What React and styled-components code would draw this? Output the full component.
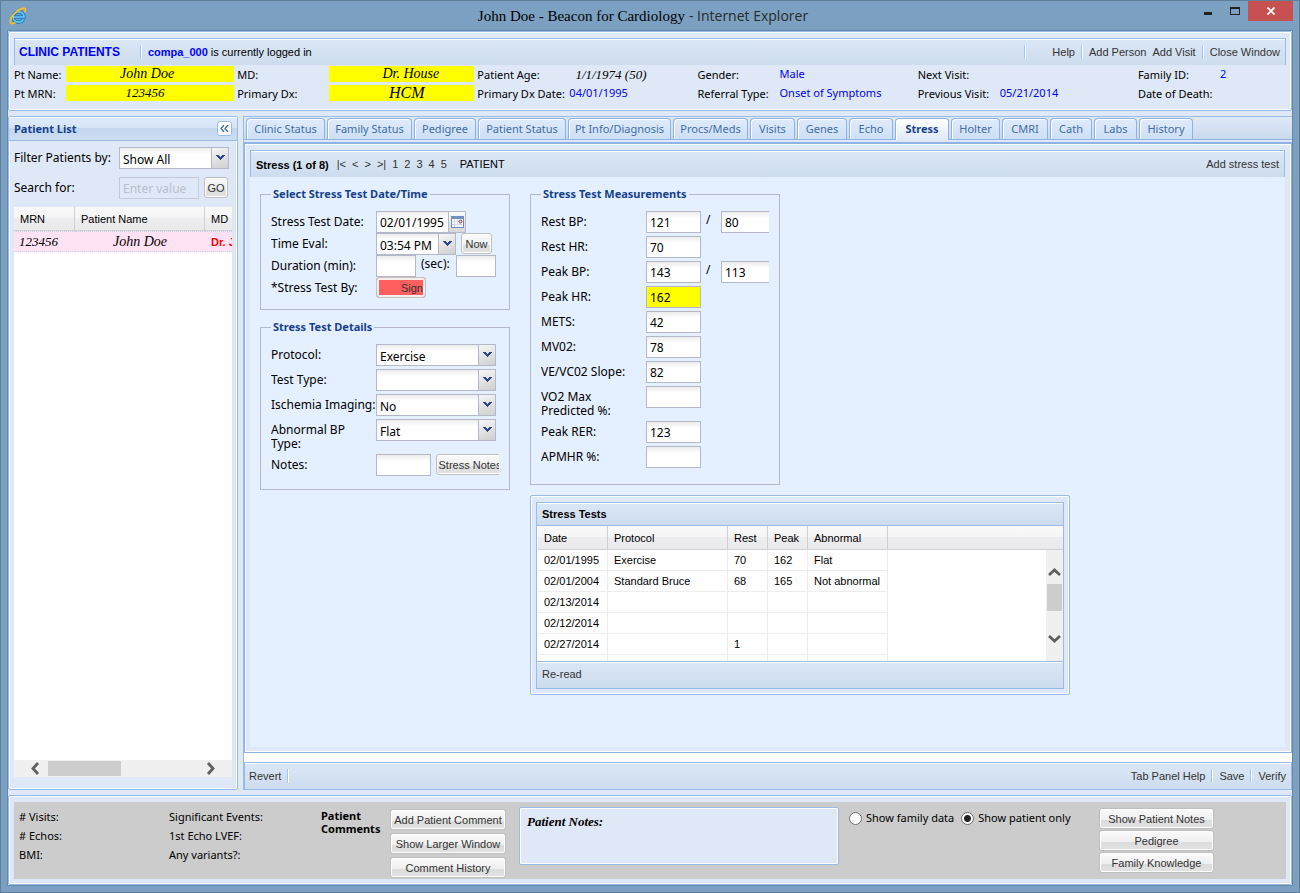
import React, { useState } from 'react';
import styled, { createGlobalStyle } from 'styled-components';

const sans = '"Noto Sans", "Open Sans", sans-serif';
const arial = '"Liberation Sans", Arial, sans-serif';
const serif = '"Liberation Serif", "Times New Roman", serif';

const GlobalStyle = createGlobalStyle`
  * {
    box-sizing: border-box;
  }
  body {
    margin: 0;
    font-family: ${sans};
    font-size: 12px;
    line-height: 14px;
    color: #000;
  }
  button, input, select {
    font: inherit;
    color: inherit;
    margin: 0;
  }
  button {
    cursor: pointer;
  }
`;

/* window chrome */

const Window = styled.div`
  display: flex;
  flex-direction: column;
  min-height: 100vh;
  padding: 0 6px 6px;
  background: #7ba0c1;
  border: 1px solid #5f7e99;
`;

const TitleBar = styled.header`
  display: grid;
  grid-template-columns: 1fr auto 1fr;
  height: 29px;
`;

const TitleIcon = styled.svg`
  width: 18px;
  height: 18px;
  margin: 6px 0 0 2px;
`;

const Title = styled.h1`
  margin: 0;
  padding: 5px 14px 0 0;
  font: normal 15px/20px ${serif};
  span {
    margin-left: 4px;
    font: 14px/20px "Open Sans", ${sans};
    color: #2a2a2a;
  }
`;

const WindowButtons = styled.div`
  display: flex;
  justify-content: flex-end;
`;

const WindowButton = styled.button`
  width: ${(props) => (props.$close ? '45px' : '27px')};
  height: 20px;
  padding: 0;
  border: 0;
  background: ${(props) => (props.$close ? '#c75050' : 'transparent')};
  svg {
    display: block;
    margin: auto;
  }
`;

const Client = styled.div`
  flex: 1;
  display: flex;
  flex-direction: column;
  gap: 5px;
  background: #dfe8f6;
  border: 1px solid #6389ab;
`;

/* shared pieces */

const Panel = styled.section`
  border: 1px solid #99bbe8;
  border-radius: 2px;
  box-shadow: inset 0 0 0 1px #fff;
  background: #dfe8f6;
`;

const Toolbar = styled.div`
  display: flex;
  align-items: center;
  height: ${(props) => props.$height || '27px'};
  padding: 0 5px 0 4px;
  font: 11px/14px ${arial};
  background: linear-gradient(#dbe7f5, #cddcee);
  border: 1px solid #99bbe8;
  border-bottom-width: ${(props) => (props.$closed ? '1px' : 0)};
  box-shadow: inset 0 1px 0 #fff;
`;

const ToolButton = styled.button`
  padding: 0;
  margin-left: ${(props) => props.$gap || '0'};
  border: 0;
  background: none;
  color: #333;
`;

const Separator = styled.span`
  width: 2px;
  height: 14px;
  margin: 0 6px;
  background: linear-gradient(90deg, #98c8ff 50%, #fff 50%);
`;

const Spacer = styled.span`
  flex: 1;
`;

const Button = styled.button`
  height: 21px;
  flex: none;
  width: ${(props) => props.$width || 'auto'};
  padding: 0 1px;
  font: 11px/14px ${arial};
  color: #333;
  white-space: nowrap;
  border: 1px solid #bfbfbf;
  border-radius: 3px;
  box-shadow: inset 0 0 0 1px #fff;
  background: linear-gradient(#fafafa 0%, #efefef 58%, #dcdcdc 60%, #e2e2e2 100%);
`;

const SignButton = styled(Button)`
  padding: 0 2px;
  text-align: right;
  background: #ff5f5f;
  border-color: #c9c0bd;
  box-shadow: inset 0 0 0 2px #f3efee;
`;

const TextInput = styled.input`
  flex: none;
  width: ${(props) => props.$width};
  height: 22px;
  padding: 1px 3px;
  border: 1px solid #b5b8c8;
  border-radius: 0;
  background: ${(props) => props.$fill || 'linear-gradient(#ececec, #fff 6px)'};
  &:disabled {
    opacity: 0.6;
    background: #dfe8f6;
  }
  &::placeholder {
    color: #9fa5b0;
    opacity: 1;
  }
`;

const ComboBox = styled.span`
  position: relative;
  flex: none;
  display: block;
  width: ${(props) => props.$width};
  height: 22px;
`;

const ComboSelect = styled.select`
  appearance: none;
  width: 100%;
  height: 22px;
  padding: 3px 18px 0 3px;
  border: 1px solid #b5b8c8;
  border-radius: 0;
  background: linear-gradient(#ececec, #fff 6px);
`;

const ComboTrigger = styled.span`
  position: absolute;
  top: 1px;
  right: 1px;
  display: grid;
  place-items: center;
  width: 17px;
  height: 20px;
  border-left: 1px solid #b5b8c8;
  background: linear-gradient(160deg, #f6f6f6, #cfcfcf);
  pointer-events: none;
`;

const CalendarButton = styled.button`
  flex: none;
  display: grid;
  place-items: center;
  width: 17px;
  height: 22px;
  padding: 0;
  border: 1px solid #b5b8c8;
  border-left: 0;
  background: linear-gradient(#fafafa, #d8d8d8);
`;

/* clinic header */

const HeaderPanel = styled(Panel)`
  padding: 6px 5px 7px;
`;

const ClinicName = styled.strong`
  font-size: 12px;
  color: #00f;
  margin-right: 14px;
`;

const UserName = styled.b`
  color: #00f;
  margin-right: 3px;
`;

const InfoGrid = styled.dl`
  display: grid;
  grid-template-columns: 223fr 240fr 220fr 220fr 220fr 148fr;
  grid-auto-rows: 19px;
  margin: 0;
  font-size: 11px;
`;

const InfoItem = styled.div`
  display: flex;
  padding-right: 3px;
`;

const InfoLabel = styled.dt`
  flex: none;
  width: ${(props) => props.$width || '82px'};
  padding-top: 3px;
  white-space: nowrap;
`;

const InfoValue = styled.dd`
  margin: 0;
  padding-top: 2px;
  color: #0000f0;
  white-space: nowrap;
`;

const MarkedValue = styled(InfoValue)`
  flex: 1;
  height: ${(props) => (props.$plain ? '18px' : '16px')};
  margin-top: 1px;
  padding: 0 ${(props) => props.$shift || '0'} 0 ${(props) => props.$lead || '0'};
  font: italic ${(props) => props.$size || '14px'} / ${(props) => (props.$plain ? '18px' : '16px')} ${serif};
  color: #000;
  text-align: center;
  background: ${(props) => (props.$plain ? 'none' : '#ff0')};
`;

/* work area */

const WorkArea = styled.main`
  flex: 1;
  display: grid;
  grid-template-columns: 230px 1fr;
  gap: 5px;
`;

const ListPanel = styled(Panel)`
  display: flex;
  flex-direction: column;
`;

const ListHeader = styled.div`
  display: flex;
  align-items: center;
  justify-content: space-between;
  height: 24px;
  padding: 0 5px;
  color: #15428b;
  border-bottom: 1px solid #99bbe8;
  background: linear-gradient(#dfebfa 0%, #d5e4f6 48%, #c3d6ee 50%, #ccddf3 100%);
  box-shadow: inset 0 1px 0 #fff;
  h2 {
    margin: 0;
    font-size: 11px;
  }
`;

const CollapseButton = styled.button`
  display: grid;
  place-items: center;
  width: 15px;
  height: 15px;
  padding: 0;
  border: 1px solid #9dbde8;
  border-radius: 3px;
  background: #fff;
`;

const ListBody = styled.div`
  flex: 1;
  display: flex;
  flex-direction: column;
  gap: 8px;
  padding: 6px 5px 12px;
`;

const FilterRow = styled.div`
  display: flex;
  label {
    width: 105px;
    padding-top: 4px;
  }
  button {
    margin: 0 0 0 5px;
  }
`;

const ListBox = styled.div`
  flex: 1;
  display: flex;
  flex-direction: column;
  overflow: hidden;
  background: #fff;
`;

const HorizontalBar = styled.div`
  display: flex;
  align-items: center;
  height: 17px;
  margin-top: auto;
  padding: 0 15px;
  background: #f0f0f0;
  svg:last-child {
    margin-left: auto;
  }
`;

const HorizontalThumb = styled.span`
  width: 73px;
  height: 15px;
  margin-left: 6px;
  background: #cdcdcd;
`;

const DataTable = styled.table`
  table-layout: fixed;
  width: 100%;
  border-collapse: separate;
  border-spacing: 0;
  font: 11px/14px ${arial};
  white-space: nowrap;
  th {
    height: 24px;
    padding: 0 6px;
    font-weight: normal;
    text-align: left;
    border-right: 1px solid #d0d0d0;
    border-bottom: 1px solid #d0d0d0;
    background: linear-gradient(#f9f9f9 0%, #f5f5f5 48%, #ededef 50%, #eaeaec 100%);
  }
  th:last-child {
    border-right: 0;
  }
`;

const PatientTable = styled(DataTable)`
  td {
    height: 21px;
    padding: 0 6px;
    overflow: hidden;
    background: #ffe2f3;
    border: dotted #c3cfe6;
    border-width: 1px 0;
  }
`;

const HandCell = styled.td`
  && {
    padding: 0 5px;
    font: italic ${(props) => props.$size || '14px'} / 16px ${serif};
    text-align: ${(props) => props.$align || 'left'};
  }
`;

const AlertCell = styled.td`
  color: #f00;
  font-weight: bold;
`;

/* tab panel */

const TabPanel = styled.section`
  display: flex;
  flex-direction: column;
  min-width: 0;
  background: #fff;
  border-left: 1px solid #99bbe8;
`;

const TabStrip = styled.nav`
  display: flex;
  gap: 2px;
  padding: 1px 2px 0;
  border-top: 1px solid #99bbe8;
  border-bottom: 1px solid #8db2e3;
  background: linear-gradient(#dfe9f7, #c9daee);
`;

const Tab = styled.button`
  flex: none;
  height: ${(props) => (props.$active ? '22px' : '21px')};
  margin-bottom: ${(props) => (props.$active ? '-1px' : '0')};
  width: ${(props) => props.$width}px;
  padding: 0 0 1px;
  font-size: 11px;
  font-weight: ${(props) => (props.$active ? 'bold' : 'normal')};
  color: ${(props) => (props.$active ? '#15428b' : '#416da3')};
  white-space: nowrap;
  border: 1px solid #8db2e3;
  border-bottom: 0;
  border-radius: 4px 4px 0 0;
  box-shadow: inset 1px 1px 0 #fff;
  background: ${(props) =>
    props.$active ? 'linear-gradient(#fff, #dfe9f7)' : 'linear-gradient(#dfebfb, #cddff5)'};
`;

const TabSpacer = styled.div`
  height: 2px;
  background: #dfe8f6;
`;

const TabBody = styled.div`
  flex: 1;
  display: flex;
  flex-direction: column;
  margin-bottom: 9px;
  padding: 6px 6px 5px 5px;
  border: 1px solid #8db2e3;
  border-top-width: 2px;
  box-shadow: inset 0 0 0 1px #fff;
  background: #dfe8f6;
`;

const RecordTitle = styled.b`
  margin: 0 8px 0 1px;
  padding-top: 2px;
  font-size: 11px;
`;

const Pager = styled.div`
  display: flex;
  gap: 6px;
  margin-right: 13px;
`;

const FormArea = styled.div`
  flex: 1;
  display: grid;
  grid-template-columns: 250px 540px;
  gap: 20px;
  padding: 10px;
  align-items: start;
  background: #e4f0ff;
`;

const Column = styled.div`
  display: grid;
  gap: 10px;
`;

const Fieldset = styled.fieldset`
  width: 250px;
  min-width: 0;
  margin: 0;
  padding: 10px 10px ${(props) => props.$bottom || '10px'};
  border: 1px solid #b5b8c8;
  legend {
    padding: 0 2px;
    font-size: 11px;
    font-weight: bold;
    color: #15428b;
  }
`;

const Field = styled.div`
  display: flex;
  margin-bottom: ${(props) => (props.$tight ? '0' : '3px')};
  overflow: hidden;
`;

const FieldLabel = styled.label`
  flex: none;
  width: 105px;
  padding-top: 4px;
`;

const Inline = styled.label`
  flex: none;
  width: ${(props) => props.$width};
  padding: 2px 0 0 5px;
`;

const Gap = styled.span`
  flex: none;
  width: 5px;
`;

const TestsPanel = styled(Panel)`
  padding: 6px 5px 5px;
`;

const TestsFrame = styled.div`
  border: 1px solid #99bbe8;
`;

const TestsTitle = styled.h2`
  height: 23px;
  margin: 0;
  padding: 4px 5px 0;
  font: bold 11px/14px ${arial};
  border-bottom: 1px solid #99bbe8;
  background: linear-gradient(#dbe7f5, #cddcee);
  box-shadow: inset 0 1px 0 #fff;
`;

const TestsGrid = styled.div`
  position: relative;
  height: 135px;
  padding-left: 1px;
  overflow: hidden;
  background: #fff;
`;

const TestsTable = styled(DataTable)`
  td {
    height: 21px;
    padding: 0 6px;
    border-right: 1px solid #ededed;
    border-bottom: 1px solid #ededed;
  }
  td:last-child {
    border: 0;
  }
`;

const VerticalBar = styled.div`
  position: absolute;
  top: 24px;
  right: 0;
  bottom: 0;
  display: flex;
  flex-direction: column;
  align-items: center;
  width: 17px;
  padding: 16px 0;
  background: #f0f0f0;
  svg:last-child {
    margin-top: auto;
  }
`;

const VerticalThumb = styled.span`
  width: 15px;
  height: 27px;
  margin-top: 5px;
  background: #cdcdcd;
`;

const TestsFooter = styled.div`
  display: flex;
  align-items: center;
  height: 27px;
  padding: 0 5px 2px;
  font: 11px/14px ${arial};
  border-top: 1px solid #99bbe8;
  background: linear-gradient(#dbe7f5, #cddcee);
  box-shadow: inset 0 1px 0 #fff;
`;

/* bottom summary */

const SummaryPanel = styled(Panel).attrs({ as: 'footer' })`
  padding: 6px 5px 5px;
`;

const Summary = styled.div`
  display: flex;
  height: 77px;
  padding: 0 5px;
  font-size: 11px;
  background: #ccc;
`;

const Facts = styled.div`
  display: grid;
  align-content: start;
  gap: 5px;
  width: ${(props) => props.$width};
  padding-top: 8px;
  p {
    margin: 0;
  }
`;

const CommentsTitle = styled.h2`
  width: 69px;
  margin: 0;
  padding-top: 7px;
  font-size: 11px;
  line-height: 13px;
`;

const ButtonStack = styled.div`
  display: grid;
  align-content: start;
  width: ${(props) => props.$width};
  gap: ${(props) => props.$gap};
  padding-top: ${(props) => props.$top};
`;

const NotesBox = styled(Panel)`
  width: 320px;
  height: 58px;
  margin: 5px 10px 0 13px;
  padding: 6px 7px;
  font: italic bold 13px/16px ${serif};
`;

const RadioGroup = styled.div`
  display: flex;
  gap: 7px;
  width: 250px;
  padding-top: 9px;
  label {
    display: flex;
    gap: 4px;
    height: 14px;
    white-space: nowrap;
  }
`;

const Radio = styled.input`
  appearance: none;
  flex: none;
  width: 13px;
  height: 13px;
  margin: 1px 0 0;
  border: 1px solid #707070;
  border-radius: 50%;
  background: #fff;
  &:checked {
    background: radial-gradient(#222 0 3px, #fff 4px);
  }
`;

const Chevron = ({ direction }) => {
  const paths = {
    left: 'M9 1 L4 6.500 L9 12',
    right: 'M4 1 L9 6.500 L4 12',
    up: 'M1 9 L6.500 4 L12 9',
    down: 'M1 4 L6.500 9 L12 4',
  };
  return (
    <svg width="13" height="13" viewBox="0 0 13 13" fill="none" stroke="#606060" strokeWidth="2.800">
      <path d={paths[direction]} />
    </svg>
  );
};

const Combo = ({ id, value, width, ...rest }) => (
  <ComboBox $width={width}>
    <ComboSelect id={id} defaultValue={value} {...rest}>
      <option value={value}>{value}</option>
    </ComboSelect>
    <ComboTrigger>
      <svg width="9" height="6" viewBox="0 0 9 6" shapeRendering="crispEdges">
        <path d="M0 0h3v1h1v1h1V1h1V0h3v1H8v1H7v1H6v1H5v1H4V4H3V3H2V2H1V1H0z" fill="#27468c" />
      </svg>
    </ComboTrigger>
  </ComboBox>
);

const tabs = [
  ['Clinic Status', 79],
  ['Family Status', 85],
  ['Pedigree', 62],
  ['Patient Status', 88],
  ['Pt Info/Diagnosis', 103],
  ['Procs/Meds', 75],
  ['Visits', 45],
  ['Genes', 50],
  ['Echo', 44],
  ['Stress', 54],
  ['Holter', 49],
  ['CMRI', 46],
  ['Cath', 42],
  ['Labs', 43],
  ['History', 54],
];

const measurements = [
  { label: 'Rest BP:', value: '121', second: '80' },
  { label: 'Rest HR:', value: '70' },
  { label: 'Peak BP:', value: '143', second: '113' },
  { label: 'Peak HR:', value: '162', fill: '#ff0' },
  { label: 'METS:', value: '42' },
  { label: 'MV02:', value: '78' },
  { label: 'VE/VC02 Slope:', value: '82' },
  { label: 'VO2 Max Predicted %:', value: '' },
  { label: 'Peak RER:', value: '123' },
  { label: 'APMHR %:', value: '' },
];

const details = [
  ['Protocol:', 'Exercise'],
  ['Test Type:', ''],
  ['Ischemia Imaging:', 'No'],
  ['Abnormal BP Type:', 'Flat'],
];

const tests = [
  ['02/01/1995', 'Exercise', '70', '162', 'Flat'],
  ['02/01/2004', 'Standard Bruce', '68', '165', 'Not abnormal'],
  ['02/13/2014', '', '', '', ''],
  ['02/12/2014', '', '', '', ''],
  ['02/27/2014', '', '1', '', ''],
  ['', '', '', '', ''],
];

const ClinicHeader = () => (
  <HeaderPanel>
    <Toolbar>
      <ClinicName>CLINIC PATIENTS</ClinicName>
      <Separator />
      <UserName>compa_000</UserName>
      is currently logged in
      <Spacer />
      <Separator />
      <ToolButton $gap="20px">Help</ToolButton>
      <Separator />
      <ToolButton>Add Person</ToolButton>
      <ToolButton $gap="6px">Add Visit</ToolButton>
      <Separator />
      <ToolButton>Close Window</ToolButton>
    </Toolbar>
    <InfoGrid>
      <InfoItem>
        <InfoLabel $width="52px">Pt Name:</InfoLabel>
        <MarkedValue $shift="6px">John Doe</MarkedValue>
      </InfoItem>
      <InfoItem>
        <InfoLabel $width="92px">MD:</InfoLabel>
        <MarkedValue $lead="18px">Dr. House</MarkedValue>
      </InfoItem>
      <InfoItem>
        <InfoLabel $width="92px">Patient Age:</InfoLabel>
        <MarkedValue $plain $size="13px" $shift="42px">1/1/1974 (50)</MarkedValue>
      </InfoItem>
      <InfoItem>
        <InfoLabel>Gender:</InfoLabel>
        <InfoValue>Male</InfoValue>
      </InfoItem>
      <InfoItem>
        <InfoLabel>Next Visit:</InfoLabel>
        <InfoValue />
      </InfoItem>
      <InfoItem>
        <InfoLabel>Family ID:</InfoLabel>
        <InfoValue>2</InfoValue>
      </InfoItem>
      <InfoItem>
        <InfoLabel $width="52px">Pt MRN:</InfoLabel>
        <MarkedValue $size="13px" $shift="10px">123456</MarkedValue>
      </InfoItem>
      <InfoItem>
        <InfoLabel $width="92px">Primary Dx:</InfoLabel>
        <MarkedValue $size="16px" $lead="10px">HCM</MarkedValue>
      </InfoItem>
      <InfoItem>
        <InfoLabel $width="92px">Primary Dx Date:</InfoLabel>
        <InfoValue>04/01/1995</InfoValue>
      </InfoItem>
      <InfoItem>
        <InfoLabel>Referral Type:</InfoLabel>
        <InfoValue>Onset of Symptoms</InfoValue>
      </InfoItem>
      <InfoItem>
        <InfoLabel>Previous Visit:</InfoLabel>
        <InfoValue>05/21/2014</InfoValue>
      </InfoItem>
      <InfoItem>
        <InfoLabel>Date of Death:</InfoLabel>
        <InfoValue />
      </InfoItem>
    </InfoGrid>
  </HeaderPanel>
);

const PatientList = () => (
  <ListPanel>
    <ListHeader>
      <h2>Patient List</h2>
      <CollapseButton aria-label="Collapse">
        <svg width="9" height="7" viewBox="0 0 9 7" fill="none" stroke="#3d69a8" strokeWidth="1.3">
          <path d="M4 0 L1 3.5 L4 7 M8 0 L5 3.5 L8 7" />
        </svg>
      </CollapseButton>
    </ListHeader>
    <ListBody>
      <FilterRow>
        <label htmlFor="filter">Filter Patients by:</label>
        <Combo id="filter" value="Show All" width="110px" />
      </FilterRow>
      <FilterRow>
        <label htmlFor="search">Search for:</label>
        <TextInput id="search" $width="80px" placeholder="Enter value" disabled />
        <Button $width="24px">GO</Button>
      </FilterRow>
      <ListBox>
        <PatientTable>
          <colgroup>
            <col style={{ width: 61 }} />
            <col style={{ width: 130 }} />
            <col />
          </colgroup>
          <thead>
            <tr>
              <th>MRN</th>
              <th>Patient Name</th>
              <th>MD</th>
            </tr>
          </thead>
          <tbody>
            <tr>
              <HandCell $size="13px">123456</HandCell>
              <HandCell $align="center">John Doe</HandCell>
              <AlertCell>Dr. J</AlertCell>
            </tr>
          </tbody>
        </PatientTable>
        <HorizontalBar>
          <Chevron direction="left" />
          <HorizontalThumb />
          <Chevron direction="right" />
        </HorizontalBar>
      </ListBox>
    </ListBody>
  </ListPanel>
);

const DateTimeFields = () => (
  <Fieldset $bottom="11px">
    <legend>Select Stress Test Date/Time</legend>
    <Field $tight>
      <FieldLabel htmlFor="test-date">Stress Test Date:</FieldLabel>
      <TextInput id="test-date" $width="73px" defaultValue="02/01/1995" />
      <CalendarButton aria-label="Pick a date">
        <svg width="13" height="13" viewBox="0 0 13 13">
          <path d="M0 0h13v12H0z" fill="#6d8fbe" />
          <path d="M1 3h11v8H1z" fill="#fff" />
          <path d="M3.500 3v8M6.500 3v8M1 5.500h6M1 8.500h10" stroke="#d6dae2" />
          <circle cx="9.500" cy="5.500" r="1.500" fill="#fff" stroke="#8c1c26" />
        </svg>
      </CalendarButton>
    </Field>
    <Field $tight>
      <FieldLabel htmlFor="test-time">Time Eval:</FieldLabel>
      <Combo id="test-time" value="03:54 PM" width="80px" />
      <Gap />
      <Button $width="31px">Now</Button>
    </Field>
    <Field $tight>
      <FieldLabel htmlFor="minutes">Duration (min):</FieldLabel>
      <TextInput id="minutes" $width="40px" />
      <Inline htmlFor="seconds" $width="40px">(sec):</Inline>
      <TextInput id="seconds" $width="40px" />
    </Field>
    <Field $tight>
      <FieldLabel htmlFor="sign">*Stress Test By:</FieldLabel>
      <SignButton id="sign" $width="50px">Sign</SignButton>
    </Field>
  </Fieldset>
);

const DetailFields = () => (
  <Fieldset>
    <legend>Stress Test Details</legend>
    {details.map(([label, value], i) => (
      <Field key={label}>
        <FieldLabel htmlFor={`detail-${i}`}>{label}</FieldLabel>
        <Combo id={`detail-${i}`} value={value} width="120px" />
      </Field>
    ))}
    <Field>
      <FieldLabel htmlFor="notes">Notes:</FieldLabel>
      <TextInput id="notes" $width="55px" />
      <Gap />
      <Button $width="68px">Stress Notes</Button>
    </Field>
  </Fieldset>
);

const MeasurementFields = () => (
  <Fieldset $bottom="13px">
    <legend>Stress Test Measurements</legend>
    {measurements.map(({ label, value, second, fill }, i) => (
      <Field key={label}>
        <FieldLabel htmlFor={`measure-${i}`}>{label}</FieldLabel>
        <TextInput id={`measure-${i}`} $width="55px" $fill={fill} defaultValue={value} />
        {second && (
          <>
            <Inline htmlFor={`measure-${i}-b`} $width="20px">/</Inline>
            <TextInput id={`measure-${i}-b`} $width="55px" defaultValue={second} />
          </>
        )}
      </Field>
    ))}
  </Fieldset>
);

const StressTests = () => (
  <TestsPanel>
    <TestsFrame>
      <TestsTitle>Stress Tests</TestsTitle>
      <TestsGrid>
        <TestsTable>
          <colgroup>
            <col style={{ width: 70 }} />
            <col style={{ width: 120 }} />
            <col style={{ width: 40 }} />
            <col style={{ width: 40 }} />
            <col style={{ width: 80 }} />
            <col />
          </colgroup>
          <thead>
            <tr>
              <th>Date</th>
              <th>Protocol</th>
              <th>Rest</th>
              <th>Peak</th>
              <th>Abnormal</th>
              <th />
            </tr>
          </thead>
          <tbody>
            {tests.map((row, i) => (
              <tr key={i}>
                {row.map((cell, j) => (
                  <td key={j}>{cell}</td>
                ))}
                <td />
              </tr>
            ))}
          </tbody>
        </TestsTable>
        <VerticalBar>
          <Chevron direction="up" />
          <VerticalThumb />
          <Chevron direction="down" />
        </VerticalBar>
      </TestsGrid>
      <TestsFooter>
        <ToolButton>Re-read</ToolButton>
      </TestsFooter>
    </TestsFrame>
  </TestsPanel>
);

const StressTab = () => (
  <TabBody>
    <Toolbar>
      <RecordTitle>Stress (1 of 8)</RecordTitle>
      <Pager>
        {['|<', '<', '>', '>|', '1', '2', '3', '4', '5'].map((page) => (
          <ToolButton key={page}>{page}</ToolButton>
        ))}
      </Pager>
      PATIENT
      <Spacer />
      <ToolButton>Add stress test</ToolButton>
    </Toolbar>
    <FormArea>
      <Column>
        <DateTimeFields />
        <DetailFields />
      </Column>
      <Column>
        <MeasurementFields />
        <StressTests />
      </Column>
    </FormArea>
  </TabBody>
);

const SummaryBar = () => {
  const [scope, setScope] = useState('patient');
  return (
    <SummaryPanel>
      <Summary>
        <Facts $width="150px">
          <p># Visits:</p>
          <p># Echos:</p>
          <p>BMI:</p>
        </Facts>
        <Facts $width="152px">
          <p>Significant Events:</p>
          <p>1st Echo LVEF:</p>
          <p>Any variants?:</p>
        </Facts>
        <CommentsTitle>Patient Comments</CommentsTitle>
        <ButtonStack $width="116px" $gap="3px" $top="7px">
          <Button>Add Patient Comment</Button>
          <Button>Show Larger Window</Button>
          <Button>Comment History</Button>
        </ButtonStack>
        <NotesBox>Patient Notes:</NotesBox>
        <RadioGroup>
          <label>
            <Radio
              type="radio"
              name="scope"
              checked={scope === 'family'}
              onChange={() => setScope('family')}
            />
            Show family data
          </label>
          <label>
            <Radio
              type="radio"
              name="scope"
              checked={scope === 'patient'}
              onChange={() => setScope('patient')}
            />
            Show patient only
          </label>
        </RadioGroup>
        <ButtonStack $width="115px" $gap="1px" $top="6px">
          <Button>Show Patient Notes</Button>
          <Button>Pedigree</Button>
          <Button>Family Knowledge</Button>
        </ButtonStack>
      </Summary>
    </SummaryPanel>
  );
};

const App = () => {
  const [active, setActive] = useState('Stress');
  return (
    <>
      <GlobalStyle />
      <Window>
        <TitleBar>
          <TitleIcon viewBox="0 0 18 18" fill="none">
            <path
              d="M4.500 10h10.500c.2-6.800-10.700-6.800-10.900.2 0 5.800 8.600 6.200 10.200 2"
              stroke="#1d7fc4"
              strokeWidth="3.600"
            />
            <path
              d="M4.500 10h10.500c.2-6.800-10.700-6.800-10.900.2 0 5.800 8.600 6.200 10.200 2"
              stroke="#6cc6f2"
              strokeWidth="1.600"
            />
            <path
              d="M15.600 5.400c1.800-3.600.4-5-3.400-3.600C6.700 3.800 1.300 10 1.300 14.600c0 2.600 2.400 2.400 5 .8"
              stroke="#f5c02a"
              strokeWidth="1.800"
            />
          </TitleIcon>
          <Title>
            John Doe - Beacon for Cardiology<span>- Internet Explorer</span>
          </Title>
          <WindowButtons>
            <WindowButton aria-label="Minimize">
              <svg width="10" height="12" viewBox="0 0 10 12">
                <path d="M1 7h8v3H1z" fill="#222" />
              </svg>
            </WindowButton>
            <WindowButton aria-label="Maximize">
              <svg width="10" height="8" viewBox="0 0 10 8">
                <path d="M0 0h10v8H0zM1 2v5h8V2z" fill="#222" fillRule="evenodd" />
              </svg>
            </WindowButton>
            <WindowButton $close aria-label="Close">
              <svg width="8" height="8" viewBox="0 0 8 8" stroke="#fff" strokeWidth="1.800">
                <path d="M0.500 0.500l7 7M7.500 0.500l-7 7" />
              </svg>
            </WindowButton>
          </WindowButtons>
        </TitleBar>
        <Client>
          <ClinicHeader />
          <WorkArea>
            <PatientList />
            <TabPanel>
              <TabStrip>
                {tabs.map(([name, width]) => (
                  <Tab
                    key={name}
                    $width={width}
                    $active={name === active}
                    onClick={() => setActive(name)}
                  >
                    {name}
                  </Tab>
                ))}
              </TabStrip>
              <TabSpacer />
              <StressTab />
              <Toolbar $height="28px" $closed>
                <ToolButton>Revert</ToolButton>
                <Separator />
                <Spacer />
                <ToolButton>Tab Panel Help</ToolButton>
                <Separator />
                <ToolButton>Save</ToolButton>
                <Separator />
                <ToolButton>Verify</ToolButton>
              </Toolbar>
            </TabPanel>
          </WorkArea>
          <SummaryBar />
        </Client>
      </Window>
    </>
  );
};

export default App;
